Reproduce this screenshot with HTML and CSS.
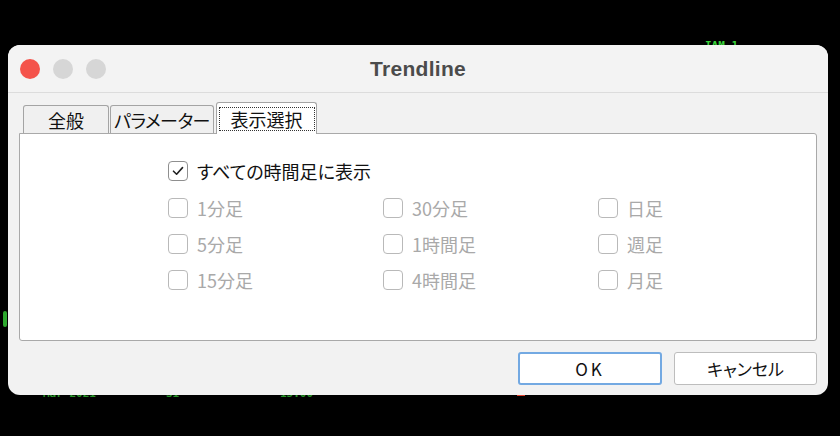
FILE: index.html
```html
<!DOCTYPE html>
<html lang="ja">
<head>
<meta charset="utf-8">
<title>Trendline</title>
<link rel="stylesheet" href="styles.css">
</head>
<body>
<div class="chart-bits">
  <span class="bit bit-top">IAM 1</span>
  <span class="bit bit-left"></span>
  <span class="bit bit-b1">Mar 2021</span>
  <span class="bit bit-b2">31</span>
  <span class="bit bit-b3">15:00</span>
  <span class="bit bit-red"></span>
</div>
<div class="window">
  <div class="titlebar">
    <div class="lights">
      <span class="light red"></span>
      <span class="light gray"></span>
      <span class="light gray"></span>
    </div>
    <div class="title">Trendline</div>
    <div></div>
  </div>
  <div class="content">
    <div class="tabs">
      <div class="tab t1">全般</div>
      <div class="tab t2">パラメーター</div>
      <div class="tab t3 active"><span class="focus">表示選択</span></div>
    </div>
    <div class="panel">
      <div class="grid">
        <label class="item all"><span class="box checked"><svg viewBox="0 0 14 14" width="14" height="14"><path d="M2.5 7.2 L5.6 10.2 L11.5 3.6" fill="none" stroke="#222" stroke-width="1.6" stroke-linecap="round" stroke-linejoin="round"/></svg></span><span class="txt">すべての時間足に表示</span></label>
        <label class="item off"><span class="box"></span><span class="txt">1分足</span></label>
        <label class="item off"><span class="box"></span><span class="txt">30分足</span></label>
        <label class="item off"><span class="box"></span><span class="txt">日足</span></label>
        <label class="item off"><span class="box"></span><span class="txt">5分足</span></label>
        <label class="item off"><span class="box"></span><span class="txt">1時間足</span></label>
        <label class="item off"><span class="box"></span><span class="txt">週足</span></label>
        <label class="item off"><span class="box"></span><span class="txt">15分足</span></label>
        <label class="item off"><span class="box"></span><span class="txt">4時間足</span></label>
        <label class="item off"><span class="box"></span><span class="txt">月足</span></label>
      </div>
    </div>
    <div class="buttons">
      <button class="btn ok">OK</button>
      <button class="btn">キャンセル</button>
    </div>
  </div>
</div>
</body>
</html>
```
FILE: styles.css
```css
* { box-sizing: border-box; }
html, body {
  margin: 0;
  padding: 0;
  background: #000;
}
body {
  width: 840px;
  height: 436px;
  overflow: hidden;
  position: relative;
  padding-top: 45px;
  padding-left: 8px;
  font-family: "Noto Sans CJK JP", "Noto Sans", sans-serif;
}
.chart-bits { position: absolute; inset: 0; z-index: 0; }
.bit {
  position: absolute;
  color: #38d23a;
  font-family: "DejaVu Sans Mono", monospace;
  font-size: 11px;
  font-weight: bold;
  line-height: 11px;
}
.bit-top { left: 705px; top: 40px; }
.bit-left { left: 3px; top: 311px; width: 4px; height: 16px; background: #38d23a; border-radius: 2px; opacity: 0.8; }
.bit-b1, .bit-b2, .bit-b3 { top: 388px; opacity: 0.7; }
.bit-b1 { left: 43px; }
.bit-b2 { left: 166px; }
.bit-b3 { left: 280px; }
.bit-red { left: 517px; top: 393px; width: 8px; height: 3px; background: #e0412e; }

.window {
  position: relative;
  z-index: 1;
  width: 820px;
  height: 350px;
  background: #f2f2f2;
  border-radius: 12px;
  overflow: hidden;
}
.titlebar {
  height: 48px;
  border-bottom: 1px solid #dcdcdc;
  display: grid;
  grid-template-columns: 1fr auto 1fr;
  align-items: center;
  padding: 0 12px;
  background: #f3f3f3;
}
.lights { display: flex; gap: 13px; }
.light { width: 20px; height: 20px; border-radius: 50%; }
.light.red { background: #f4534b; }
.light.gray { background: #d6d6d6; }
.title {
  font-family: "Liberation Sans", Arial, sans-serif;
  font-weight: bold;
  font-size: 21px;
  color: #4b4b4b;
  letter-spacing: 0.3px;
}
.content { padding: 9px 11px 0 11px; }
.tabs {
  display: flex;
  align-items: flex-end;
  height: 31px;
  padding-left: 4px;
  font-size: 18px;
  color: #111;
  font-feature-settings: "palt";
}
.tab {
  height: 28px;
  border: 1px solid #a4a4a4;
  border-bottom: none;
  border-radius: 3px 3px 0 0;
  background: #f0f0f0;
  display: flex;
  align-items: center;
  justify-content: center;
  line-height: 1;
}
.t1 { width: 86px; margin-right: 1px; }
.t2 { width: 104px; letter-spacing: -0.5px; }
.t3 { width: 101px; margin-left: 2px; }
.tab.active {
  height: 32px;
  margin-bottom: -1px;
  background: #fff;
  position: relative;
  z-index: 2;
}
.focus {
  border: 1px dotted #333;
  padding: 2px 2px 2px;
  width: 96px;
  text-align: center;
}
.panel {
  position: relative;
  z-index: 1;
  height: 208px;
  background: #fff;
  border: 1px solid #a9a9a9;
  border-radius: 0 3px 3px 3px;
  padding: 19px 0 0 148px;
}
.grid {
  display: grid;
  grid-template-columns: 215px 215px 215px;
  grid-auto-rows: 36.4px;
}
.item {
  display: flex;
  align-items: center;
  gap: 9px;
  font-size: 18px;
  font-feature-settings: "palt";
  line-height: 1;
}
.item.all { grid-column: 1 / 4; color: #111; }
.item.off { color: #a9a9a9; }
.box {
  width: 20px;
  height: 20px;
  border: 1.5px solid #b9b9b9;
  border-radius: 4px;
  background: #fff;
  display: flex;
  align-items: center;
  justify-content: center;
  flex: none;
}
.box.checked { border-color: #8f8f8f; }
.buttons {
  display: flex;
  justify-content: flex-end;
  gap: 12px;
  margin-top: 11px;
}
.btn {
  width: 143px;
  height: 33px;
  background: #fff;
  border: 1.5px solid #bdbdbd;
  border-radius: 3px;
  font-family: "Noto Sans CJK JP", "Noto Sans", sans-serif;
  font-size: 17px;
  color: #111;
  font-feature-settings: "palt";
  padding: 0;
  line-height: 1;
}
.btn.ok {
  width: 144px;
  border: 2px solid #73a9e2;
  letter-spacing: 3px;
}
```
